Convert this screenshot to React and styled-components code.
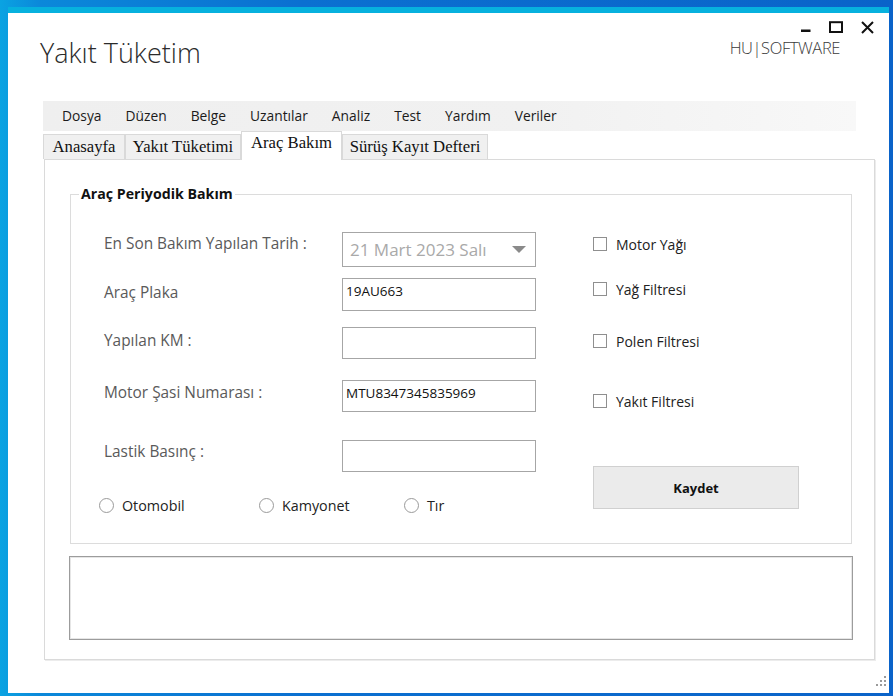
import styled, { createGlobalStyle } from "styled-components";

const GlobalStyle = createGlobalStyle`
  html, body {
    margin: 0;
    padding: 0;
  }
  body {
    width: 893px;
    height: 696px;
    overflow: hidden;
    background: linear-gradient(90deg, #0aa3e2 0px, #0b88da 40px, #0b70d1 300px, #0a63c9 100%);
    font-family: "Open Sans", "Noto Sans", sans-serif;
  }
`;

const Window = styled.div`
  position: relative;
  box-sizing: border-box;
  margin: 7px 0 0 8px;
  width: 881px;
  height: 686px;
  background: #fff;
  border-top: 6px solid #07b1de;
  display: flex;
  flex-direction: column;
`;

const Header = styled.div`
  height: 88px;
  display: flex;
  justify-content: space-between;
`;

const AppTitle = styled.h1`
  margin: 22px 0 0 32px;
  font-size: 27px;
  font-weight: 300;
  line-height: 36px;
  color: #2b2b2b;
`;

const HeaderRight = styled.div`
  display: flex;
  flex-direction: column;
  align-items: flex-end;
`;

const Controls = styled.div`
  display: flex;
  align-items: flex-start;
  margin: 8px 15px 0 0;
  height: 13px;
`;

const ControlButton = styled.span`
  display: block;
  margin-left: ${(p) => p.$gap || 0}px;
  line-height: 0;
`;

const Brand = styled.div`
  margin: 4px 49px 0 0;
  font-size: 16.5px;
  font-weight: 300;
  line-height: 20px;
  letter-spacing: -0.4px;
  color: #3a3a3a;
`;

const MenuBar = styled.nav`
  margin-left: 35px;
  width: 813px;
  height: 30px;
  box-sizing: border-box;
  padding-left: 7px;
  display: flex;
  align-items: center;
  background: linear-gradient(90deg, #efefef 0%, #f1f1f1 60%, #f8f8f8 100%);
`;

const MenuItem = styled.span`
  padding: 0 12px;
  font-size: 13.8px;
  line-height: 20px;
  color: #1b1b1b;
`;

const TabStrip = styled.div`
  margin-left: 35px;
  height: 28px;
  display: flex;
  align-items: flex-start;
`;

const Tab = styled.div`
  position: relative;
  box-sizing: border-box;
  width: ${(p) => p.$w}px;
  margin-top: ${(p) => (p.$active ? 0 : 3)}px;
  height: ${(p) => (p.$active ? 29 : 25)}px;
  border: 1px solid #d9d9d9;
  border-bottom: none;
  background: ${(p) => (p.$active ? "#fff" : "#f0f0f0")};
  z-index: ${(p) => (p.$active ? 1 : 0)};
  font-family: "Liberation Serif", "Times New Roman", serif;
  font-size: 16.7px;
  line-height: ${(p) => (p.$active ? 21 : 23)}px;
  text-align: center;
  color: #111;
  white-space: nowrap;
`;

const TabPage = styled.div`
  margin-left: 36px;
  width: 831px;
  height: 501px;
  box-sizing: border-box;
  padding: 25px 0 0 25px;
  border: 1px solid #dadada;
  box-shadow: 1px 1px 0 #ececec;
  background: #fff;
`;

const GroupBox = styled.fieldset`
  margin: 0;
  padding: 0;
  min-width: 0;
  width: 782px;
  box-sizing: border-box;
  border: 1px solid #dcdcdc;
`;

const GroupTitle = styled.legend`
  margin-left: 8px;
  padding: 0 2px;
  font-size: 14.2px;
  font-weight: 700;
  line-height: 18px;
  color: #111;
`;

const FormGrid = styled.div`
  display: flex;
  align-items: flex-start;
  gap: 57px;
  padding: 0 0 30px 33px;
`;

const Column = styled.div`
  display: flex;
  flex-direction: column;
`;

const FieldRow = styled.div`
  display: flex;
  align-items: flex-start;
  margin-top: ${(p) => p.$top}px;
`;

const FieldLabel = styled.label`
  width: 238px;
  padding-top: ${(p) => p.$offset || 0}px;
  font-size: 15.4px;
  line-height: 24px;
  color: #5a5a5a;
`;

const TextBox = styled.input`
  box-sizing: border-box;
  width: 194px;
  height: ${(p) => p.$h || 32}px;
  margin: 0;
  padding: 0 3px ${(p) => (p.$h || 32) - 25}px;
  border: 1px solid #a6a6a6;
  border-radius: 0;
  outline: none;
  font-family: "Open Sans", "Noto Sans", sans-serif;
  font-size: 13.5px;
  line-height: 18px;
  color: #111;
  background: #fff;
`;

const DateBox = styled.div`
  box-sizing: border-box;
  width: 194px;
  height: 35px;
  padding: 0 9px 0 7px;
  border: 1px solid #a6a6a6;
  display: flex;
  align-items: center;
  justify-content: space-between;
  font-size: 17px;
  color: #a9a9a9;
`;

const RadioRow = styled.div`
  display: flex;
  margin: 26px 0 0 -5px;
  height: 15px;
`;

const RadioItem = styled.label`
  display: flex;
  align-items: center;
  gap: 8px;
  width: ${(p) => p.$w || "auto"};
  font-size: 14.3px;
  line-height: 15px;
  color: #222;
`;

const RadioDot = styled.span`
  width: 15px;
  height: 15px;
  box-sizing: border-box;
  border: 1px solid #9a9a9a;
  border-radius: 50%;
  background: #fff;
`;

const CheckRow = styled.label`
  display: flex;
  align-items: center;
  gap: 9px;
  height: 16px;
  margin-top: ${(p) => p.$top}px;
  font-size: 14px;
  color: #222;
`;

const CheckBox = styled.span`
  width: 14px;
  height: 14px;
  box-sizing: border-box;
  border: 1px solid #8f8f8f;
  background: #fff;
`;

const SaveButton = styled.button`
  margin-top: 57px;
  width: 206px;
  height: 43px;
  box-sizing: border-box;
  border: 1px solid #d0d0d0;
  background: #ebebeb;
  font-family: "Open Sans", "Noto Sans", sans-serif;
  font-size: 13px;
  font-weight: 700;
  color: #111;
  padding: 0;
`;

const OutputBox = styled.div`
  margin: 12px 0 0 -1px;
  width: 784px;
  height: 84px;
  box-sizing: border-box;
  border: 1px solid #9c9c9c;
  box-shadow: inset 0 0 0 1px #e6e6e6;
`;

const ResizeGrip = styled.svg`
  position: absolute;
  right: 2px;
  bottom: 5px;
`;

const menus = ["Dosya", "Düzen", "Belge", "Uzantılar", "Analiz", "Test", "Yardım", "Veriler"];
const tabs = [
  { label: "Anasayfa", w: 82 },
  { label: "Yakıt Tüketimi", w: 116 },
  { label: "Araç Bakım", w: 101, active: true },
  { label: "Sürüş Kayıt Defteri", w: 146 },
];

export default function App() {
  return (
    <>
      <GlobalStyle />
      <Window>
        <Header>
          <AppTitle>Yakıt Tüketim</AppTitle>
          <HeaderRight>
            <Controls>
              <ControlButton>
                <svg width="10" height="13" viewBox="0 0 10 13">
                  <rect x="0" y="8.5" width="9.5" height="2.5" fill="#111" />
                </svg>
              </ControlButton>
              <ControlButton $gap={18}>
                <svg width="14" height="12" viewBox="0 0 14 12">
                  <rect x="1" y="1.2" width="12" height="9.8" fill="none" stroke="#111" strokeWidth="2" />
                </svg>
              </ControlButton>
              <ControlButton $gap={18}>
                <svg width="13" height="13" viewBox="0 0 13 13">
                  <path d="M1 1 L12 12 M12 1 L1 12" stroke="#111" strokeWidth="2" />
                </svg>
              </ControlButton>
            </Controls>
            <Brand>HU|SOFTWARE</Brand>
          </HeaderRight>
        </Header>

        <MenuBar>
          {menus.map((m) => (
            <MenuItem key={m}>{m}</MenuItem>
          ))}
        </MenuBar>

        <TabStrip>
          {tabs.map((t) => (
            <Tab key={t.label} $w={t.w} $active={t.active}>
              {t.label}
            </Tab>
          ))}
        </TabStrip>

        <TabPage>
          <GroupBox>
            <GroupTitle>Araç Periyodik Bakım</GroupTitle>
            <FormGrid>
              <Column>
                <FieldRow $top={29}>
                  <FieldLabel>En Son Bakım Yapılan Tarih :</FieldLabel>
                  <DateBox>
                    <span>21 Mart 2023 Salı</span>
                    <svg width="14" height="7" viewBox="0 0 14 7">
                      <path d="M0 0 L14 0 L7 7 Z" fill="#8a8a8a" />
                    </svg>
                  </DateBox>
                </FieldRow>
                <FieldRow $top={11}>
                  <FieldLabel $offset={3}>Araç Plaka</FieldLabel>
                  <TextBox $h={33} defaultValue="19AU663" readOnly />
                </FieldRow>
                <FieldRow $top={16}>
                  <FieldLabel $offset={2}>Yapılan KM :</FieldLabel>
                  <TextBox defaultValue="" readOnly />
                </FieldRow>
                <FieldRow $top={21}>
                  <FieldLabel $offset={1}>Motor Şasi Numarası :</FieldLabel>
                  <TextBox defaultValue="MTU8347345835969" readOnly />
                </FieldRow>
                <FieldRow $top={28}>
                  <FieldLabel>Lastik Basınç :</FieldLabel>
                  <TextBox defaultValue="" readOnly />
                </FieldRow>
                <RadioRow>
                  <RadioItem $w="160px">
                    <RadioDot />
                    Otomobil
                  </RadioItem>
                  <RadioItem $w="145px">
                    <RadioDot />
                    Kamyonet
                  </RadioItem>
                  <RadioItem>
                    <RadioDot />
                    Tır
                  </RadioItem>
                </RadioRow>
              </Column>

              <Column>
                <CheckRow $top={33}>
                  <CheckBox />
                  Motor Yağı
                </CheckRow>
                <CheckRow $top={29}>
                  <CheckBox />
                  Yağ Filtresi
                </CheckRow>
                <CheckRow $top={36}>
                  <CheckBox />
                  Polen Filtresi
                </CheckRow>
                <CheckRow $top={44}>
                  <CheckBox />
                  Yakıt Filtresi
                </CheckRow>
                <SaveButton>Kaydet</SaveButton>
              </Column>
            </FormGrid>
          </GroupBox>
          <OutputBox />
        </TabPage>

        <ResizeGrip width="12" height="12" viewBox="0 0 12 12">
          <rect x="9" y="0" width="2" height="2" fill="#9a9a9a" />
          <rect x="5" y="4" width="2" height="2" fill="#9a9a9a" />
          <rect x="9" y="4" width="2" height="2" fill="#9a9a9a" />
          <rect x="1" y="8" width="2" height="2" fill="#9a9a9a" />
          <rect x="5" y="8" width="2" height="2" fill="#9a9a9a" />
          <rect x="9" y="8" width="2" height="2" fill="#9a9a9a" />
        </ResizeGrip>
      </Window>
    </>
  );
}
